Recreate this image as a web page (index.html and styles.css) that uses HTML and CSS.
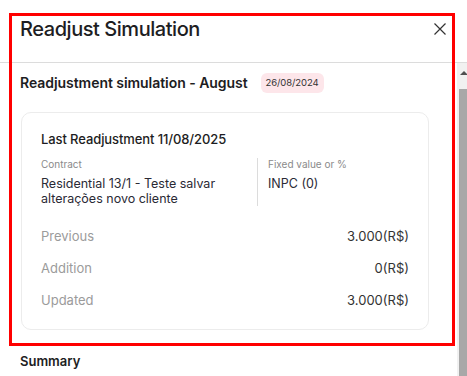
FILE: index.html
```html
<!DOCTYPE html>
<html>
<head>
<meta charset="utf-8">
<link rel="stylesheet" href="styles.css">
</head>
<body>
<div class="modal">
  <header class="modal-header">
    <h1 class="title">Readjust Simulation</h1>
    <button class="close" aria-label="Close">
      <svg width="12" height="12" viewBox="0 0 12 12"><path d="M0.5 0.5 L11.5 11.5 M11.5 0.5 L0.5 11.5" stroke="#333" stroke-width="1.2" fill="none"/></svg>
    </button>
  </header>
  <div class="body-wrap">
    <div class="content">
      <div class="section-head">
        <h2 class="subtitle">Readjustment simulation - August</h2>
        <span class="badge">26/08/2024</span>
      </div>
      <div class="card">
        <h3 class="card-title">Last Readjustment 11/08/2025</h3>
        <div class="info">
          <div class="info-col">
            <div class="label">Contract</div>
            <div class="value">Residential 13/1 - Teste salvar alterações novo cliente</div>
          </div>
          <div class="info-col right">
            <div class="label">Fixed value or %</div>
            <div class="value">INPC (0)</div>
          </div>
        </div>
        <div class="rows">
          <div class="row"><span class="row-label">Previous</span><span class="row-value">3.000(R$)</span></div>
          <div class="row"><span class="row-label">Addition</span><span class="row-value">0(R$)</span></div>
          <div class="row"><span class="row-label">Updated</span><span class="row-value">3.000(R$)</span></div>
        </div>
      </div>
      <h2 class="summary">Summary</h2>
    </div>
    <div class="scrollbar">
      <div class="arrow"></div>
      <div class="thumb"></div>
    </div>
  </div>
  <div class="highlight"></div>
</div>
</body>
</html>
```
FILE: styles.css
```css
* { box-sizing: border-box; }
html, body { margin: 0; padding: 0; }
body {
  width: 467px;
  height: 376px;
  overflow: hidden;
  background: #fff;
  font-family: Inter, "Noto Sans", sans-serif;
  color: #1f1f24;
}
.modal {
  position: relative;
  height: 376px;
  display: flex;
  flex-direction: column;
}
.modal-header {
  height: 63px;
  border-bottom: 1px solid #dcdcdc;
  display: flex;
  justify-content: space-between;
  align-items: flex-start;
  padding: 17px 20px 0 20px;
}
.title {
  margin: 0;
  font-size: 20px;
  font-weight: 500;
  letter-spacing: -0.45px;
  line-height: 24px;
  color: #1d1d22;
}
.close {
  border: 0;
  background: none;
  padding: 0;
  margin: 6px 1px 0 0;
  width: 12px;
  height: 12px;
  display: flex;
}
.body-wrap {
  flex: 1;
  display: flex;
  min-height: 0;
}
.content {
  flex: 1;
  padding: 9px 28px 0 20px;
}
.section-head {
  display: flex;
  align-items: center;
  gap: 13px;
  height: 21px;
}
.subtitle {
  margin: 0;
  font-size: 14px;
  font-weight: 600;
  letter-spacing: -0.05px;
  color: #1d1d22;
}
.badge {
  background: #fde6ea;
  color: #333;
  font-size: 9.5px;
  padding: 4px 5px;
  border-radius: 6px;
  line-height: 12px;
  letter-spacing: -0.1px;
}
.card {
  margin: 19px 0 0 1px;
  border: 1px solid #ececec;
  border-radius: 10px;
  padding: 18px 19px 20px 19px;
  height: 218px;
}
.card-title {
  margin: 0;
  font-size: 13px;
  font-weight: 500;
  line-height: 16px;
  letter-spacing: -0.1px;
  color: #1d1d22;
}
.info {
  display: flex;
  margin-top: 11px;
}
.info-col {
  flex: 0 0 216px;
}
.info-col.right {
  flex: 1;
  border-left: 1px solid #dcdcdc;
  padding-left: 10px;
  min-height: 47px;
}
.label {
  font-size: 10px;
  color: #8a8a8a;
  line-height: 13px;
}
.value {
  margin-top: 5px;
  font-size: 12.5px;
  line-height: 15px;
  color: #2a2a35;
}
.rows {
  margin-top: 22px;
  display: flex;
  flex-direction: column;
  gap: 16px;
}
.row {
  display: flex;
  justify-content: space-between;
  font-size: 13px;
  line-height: 16px;
}
.row-label { color: #9b9b9b; }
.row-value { color: #333; }
.summary {
  margin: 23px 0 0 0;
  font-size: 13px;
  font-weight: 600;
  color: #1d1d22;
}
.scrollbar {
  width: 10px;
  background: #f1f1f1;
  display: flex;
  flex-direction: column;
  align-items: center;
}
.arrow {
  margin: 8px 0 0 4px;
  width: 0;
  height: 0;
  border-left: 4px solid transparent;
  border-right: 4px solid transparent;
  border-bottom: 4px solid #505050;
}
.thumb {
  margin-top: 14px;
  flex: 1;
  width: 100%;
  margin-left: 3px;
  background: #a8a8a8;
}
.highlight {
  position: absolute;
  left: 9px;
  top: 13px;
  width: 446px;
  height: 333px;
  border: 3px solid #ff0000;
  pointer-events: none;
}
```
